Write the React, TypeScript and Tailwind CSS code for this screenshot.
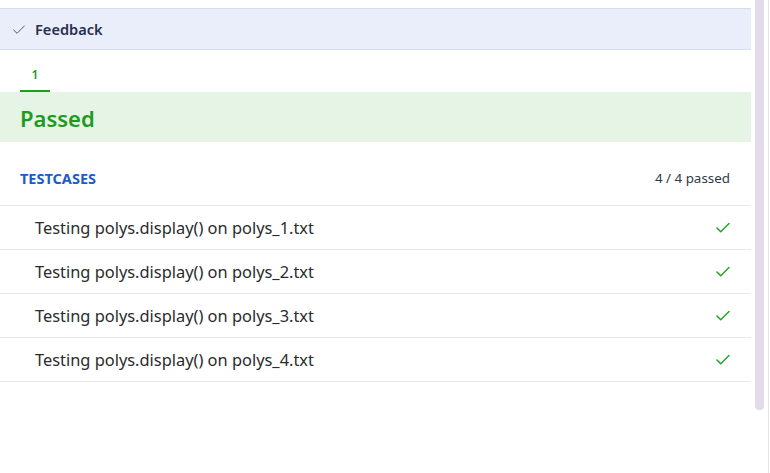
import { Check } from "lucide-react";

const cases = [
  "Testing polys.display() on polys_1.txt",
  "Testing polys.display() on polys_2.txt",
  "Testing polys.display() on polys_3.txt",
  "Testing polys.display() on polys_4.txt",
];

export default function App() {
  return (
    <div
      className="flex h-[473px] w-[770px] bg-white"
      style={{ fontFamily: '"Noto Sans", "Open Sans", sans-serif' }}
    >
      <div className="w-[751px] pt-[8px]">
        {/* feedback header */}
        <div className="flex h-[42px] items-center border-y border-[#d6ddf1] bg-[#eaeefb] pl-[11px] pt-[2px]">
          <Check className="h-[16px] w-[16px] text-[#3c4874]" strokeWidth={1.4} />
          <span className="ml-[8px] text-[14.6px] font-semibold text-[#27304f]">Feedback</span>
        </div>

        {/* tabs */}
        <div className="flex h-[42px] items-end pl-[20px]">
          <div className="flex w-[30px] flex-col items-center">
            <span className="text-[12px] font-semibold leading-none text-[#1c9a1c]">1</span>
            <div className="mt-[9px] h-[2px] w-full bg-[#1ca01c]" />
          </div>
        </div>

        <div className="flex h-[50px] items-center bg-[#e6f4e6] pl-[20px] pt-[2px]">
          <span className="text-[22px] font-semibold text-[#1f9a1f]">Passed</span>
        </div>

        <div className="flex h-[63px] items-center justify-between pl-[20px] pr-[21px] pt-[10px]">
          <span className="text-[14.5px] font-bold text-[#1a5ccc]">TESTCASES</span>
          <span className="text-[13.4px] text-[#333a45]">4 / 4 passed</span>
        </div>

        <div className="border-t border-[#e8e8e8]">
          {cases.map((c) => (
            <div
              key={c}
              className="flex h-[44px] items-center justify-between border-b border-[#e8e8e8] pl-[35px] pr-[19px] pt-[2px]"
            >
              <span className="text-[16.4px] text-[#2b2b2b]">{c}</span>
              <Check className="-mt-[2px] h-[18px] w-[18px] text-[#22a22a]" strokeWidth={2} />
            </div>
          ))}
        </div>
      </div>

      {/* scrollbar */}
      <div className="ml-[4px] h-[410px] w-[9px] rounded-b-[4px] bg-[#e2dcea]" />
      <div className="ml-[4px] h-full w-px bg-[#e4e4e4]" />
    </div>
  );
}
